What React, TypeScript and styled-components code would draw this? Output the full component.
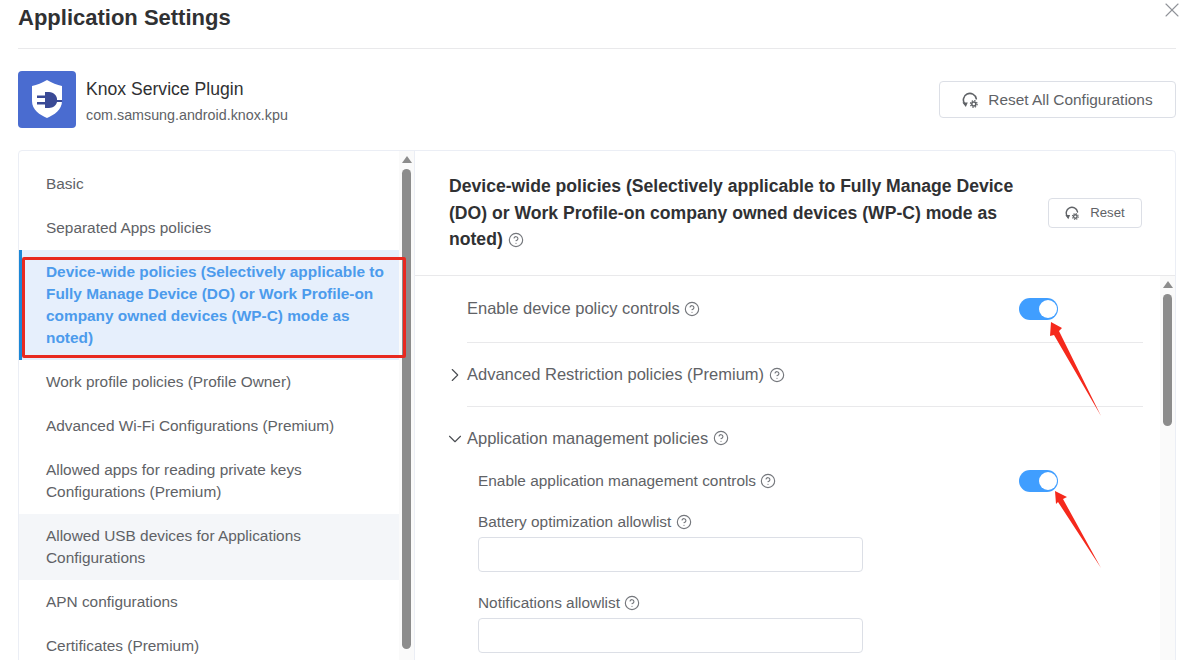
import styled, { createGlobalStyle } from "styled-components";
import { ChevronDown, ChevronRight, CircleHelp, X } from "lucide-react";

const GlobalStyle = createGlobalStyle`
  html, body {
    margin: 0;
    padding: 0;
    background: #ffffff;
    overflow: hidden;
  }
  * {
    box-sizing: border-box;
  }
`;

const navItems = [
  { label: "Basic" },
  { label: "Separated Apps policies" },
  {
    label:
      "Device-wide policies (Selectively applicable to Fully Manage Device (DO) or Work Profile-on company owned devices (WP-C) mode as noted)",
    active: true,
  },
  { label: "Work profile policies (Profile Owner)" },
  { label: "Advanced Wi-Fi Configurations (Premium)" },
  { label: "Allowed apps for reading private keys Configurations (Premium)" },
  { label: "Allowed USB devices for Applications Configurations", hovered: true },
  { label: "APN configurations" },
  { label: "Certificates (Premium)" },
];

function ResetIcon({ size }: { size: number }) {
  return (
    <svg width={size} height={size} viewBox="0 0 16 16" fill="none">
      <path
        d="M3 12.200A6.500 6.500 0 1 1 14.300 6.800"
        stroke="#5f6266"
        strokeWidth="1.6"
        strokeLinecap="round"
      />
      <path d="M0.400 10.400 L5.800 10.400 L3.800 15 Z" fill="#5f6266" />
      <circle cx="11.800" cy="12" r="2" stroke="#5f6266" strokeWidth="1.500" />
      <circle
        cx="11.800"
        cy="12"
        r="3.300"
        stroke="#5f6266"
        strokeWidth="1.300"
        strokeDasharray="1.400 1.190"
      />
    </svg>
  );
}

function KnoxLogo() {
  return (
    <svg width="58" height="57" viewBox="0 0 58 57">
      <rect width="58" height="57" rx="4" fill="#4a6cd0" />
      <path
        d="M29 9C34 12 39 14 44 15V30C44 39 36 44 29 47C22 44 14 39 14 30V15C19 14 24 12 29 9Z"
        fill="#ffffff"
      />
      <path
        d="M27 21H31C36 21 39 25 39 28V29H44V31H39C38.500 34 35 37 31 37H27Z"
        fill="#3a4a96"
      />
      <rect x="19" y="24.500" width="8" height="2.500" fill="#3a4a96" />
      <rect x="19" y="31" width="8" height="2.500" fill="#3a4a96" />
    </svg>
  );
}

function Help() {
  return <HelpIcon size={16} strokeWidth={1.7} />;
}

function Scrollbar({ width, thumb }: { width: number; thumb: number }) {
  return (
    <ScrollTrack $width={width}>
      <ScrollUp />
      <ScrollThumb $height={thumb} />
    </ScrollTrack>
  );
}

export default function App() {
  return (
    <Page>
      <GlobalStyle />
      <DialogHeader>
        <DialogTitle>Application Settings</DialogTitle>
        <CloseButton>
          <X size={24} strokeWidth={1.1} />
        </CloseButton>
      </DialogHeader>

      <AppRow>
        <AppInfo>
          <KnoxLogo />
          <AppText>
            <AppName>Knox Service Plugin</AppName>
            <AppPackage>com.samsung.android.knox.kpu</AppPackage>
          </AppText>
        </AppInfo>
        <ResetAllButton>
          <ResetIcon size={16} />
          Reset All Configurations
        </ResetAllButton>
      </AppRow>

      <Panel>
        <Sidebar>
          <NavList>
            {navItems.map((item) => (
              <NavItem key={item.label} $active={item.active} $hovered={item.hovered}>
                {item.label}
              </NavItem>
            ))}
          </NavList>
          <Scrollbar width={15} thumb={480} />
        </Sidebar>

        <Main>
          <MainHeader>
            <MainTitle>
              Device-wide policies (Selectively applicable to Fully Manage Device (DO) or Work
              Profile-on company owned devices (WP-C) mode as noted) <Help />
            </MainTitle>
            <ResetButton>
              <ResetIcon size={14} />
              <ResetLabel>Reset</ResetLabel>
            </ResetButton>
          </MainHeader>

          <MainBody>
            <Settings>
              <TopRow>
                <RowLabel>
                  Enable device policy controls <Help />
                </RowLabel>
                <Toggle />
              </TopRow>
              <SectionRow>
                <ChevronRight size={22} strokeWidth={1.2} color="#4a4d52" />
                <RowLabel>
                  Advanced Restriction policies (Premium) <Help />
                </RowLabel>
              </SectionRow>
              <SectionRow $open>
                <ChevronDown size={22} strokeWidth={1.2} color="#4a4d52" />
                <RowLabel>
                  Application management policies <Help />
                </RowLabel>
              </SectionRow>
              <SubSettings>
                <SubRow>
                  <SubLabel>
                    Enable application management controls <Help />
                  </SubLabel>
                  <Toggle />
                </SubRow>
                <Field>
                  <SubLabel>
                    Battery optimization allowlist <Help />
                  </SubLabel>
                  <TextBox />
                </Field>
                <Field>
                  <SubLabel>
                    Notifications allowlist <Help />
                  </SubLabel>
                  <TextBox />
                </Field>
              </SubSettings>
            </Settings>
            <Scrollbar width={15} thumb={132} />
          </MainBody>
        </Main>
      </Panel>

      <Annotations width="1190" height="660" viewBox="0 0 1190 660">
        <polygon
          points="1051,322 1062,328 1059,331 1101,416 1054,335 1050,336"
          fill="#f5291c"
        />
        <polygon
          points="1055,491 1067,497 1063,499 1101,568 1058,502 1056,504"
          fill="#f5291c"
        />
      </Annotations>
    </Page>
  );
}

const Page = styled.div`
  position: relative;
  width: 1190px;
  height: 660px;
  padding: 0 14px 0 18px;
  overflow: hidden;
  font-family: "Liberation Sans", Arial, sans-serif;
  color: #606266;
`;

const DialogHeader = styled.header`
  height: 49px;
  border-bottom: 1px solid #e9e9eb;
`;

const DialogTitle = styled.h1`
  margin: 0;
  font-size: 22px;
  line-height: 36px;
  font-weight: 700;
  color: #303133;
`;

const CloseButton = styled.span`
  position: absolute;
  top: -2px;
  right: 6px;
  color: #909399;
`;

const AppRow = styled.div`
  display: flex;
  align-items: center;
  justify-content: space-between;
  height: 57px;
  margin: 22px 0;
`;

const AppInfo = styled.div`
  display: flex;
  align-items: center;
  gap: 10px;
`;

const AppText = styled.div`
  display: flex;
  flex-direction: column;
  gap: 7px;
  padding-top: 3px;
`;

const AppName = styled.div`
  font-size: 17.6px;
  line-height: 20px;
  color: #303133;
`;

const AppPackage = styled.div`
  font-size: 14.3px;
  line-height: 18px;
  color: #606266;
`;

const ResetAllButton = styled.button`
  display: flex;
  align-items: center;
  justify-content: center;
  gap: 10px;
  width: 237px;
  height: 37px;
  border: 1px solid #dcdfe6;
  border-radius: 4px;
  background: #ffffff;
  color: #606266;
  font-family: inherit;
  font-size: 15.4px;
`;

const Panel = styled.section`
  display: flex;
  height: 600px;
  border: 1px solid #ebeef5;
  border-radius: 4px;
`;

const Sidebar = styled.aside`
  display: flex;
  flex: none;
  width: 396px;
  border-right: 1px solid #ebeef5;
`;

const NavList = styled.nav`
  flex: 1;
  padding-top: 11px;
`;

const NavItem = styled.div<{ $active?: boolean; $hovered?: boolean }>`
  position: relative;
  padding: 11px 14px 11px ${(p) => (p.$active ? "24px" : "27px")};
  font-size: 15.4px;
  line-height: 22px;
  border-left: ${(p) => (p.$active ? "3px solid #1b87d6" : "none")};
  font-weight: ${(p) => (p.$active ? 700 : 400)};
  color: ${(p) => (p.$active ? "#4c9bec" : "#606266")};
  background: ${(p) => (p.$active ? "#e6effc" : p.$hovered ? "#f4f6f9" : "transparent")};

  ${(p) =>
    p.$active &&
    `
    &::after {
      content: "";
      position: absolute;
      top: 7px;
      bottom: 2px;
      left: 0;
      right: -7px;
      z-index: 2;
      border: 3px solid #e8291f;
      border-radius: 2px;
    }
  `}
`;

const ScrollTrack = styled.div<{ $width: number }>`
  display: flex;
  flex: none;
  flex-direction: column;
  align-items: center;
  width: ${(p) => p.$width}px;
  background: #fafafa;
`;

const ScrollUp = styled.div`
  flex: none;
  width: 0;
  height: 0;
  margin-top: 5px;
  border-left: 5px solid transparent;
  border-right: 5px solid transparent;
  border-bottom: 7px solid #8c8c8c;
`;

const ScrollThumb = styled.div<{ $height: number }>`
  flex: none;
  width: 9px;
  height: ${(p) => p.$height}px;
  margin-top: 6px;
  border-radius: 5px;
  background: #8c8c8c;
`;

const Main = styled.div`
  display: flex;
  flex: 1;
  flex-direction: column;
  min-width: 0;
`;

const MainHeader = styled.div`
  display: flex;
  align-items: center;
  justify-content: space-between;
  flex: none;
  height: 125px;
  padding: 0 33px 0 34px;
  border-bottom: 1px solid #e9e9eb;
`;

const MainTitle = styled.h2`
  width: 575px;
  margin: 0;
  font-size: 17.6px;
  line-height: 26.4px;
  font-weight: 700;
  color: #303133;
`;

const ResetButton = styled.button`
  display: flex;
  flex: none;
  align-items: center;
  justify-content: center;
  gap: 11px;
  width: 94px;
  height: 30px;
  border: 1px solid #dcdfe6;
  border-radius: 4px;
  background: #ffffff;
  color: #606266;
  font-family: inherit;
  font-size: 13.2px;
`;

const ResetLabel = styled.span`
  padding-bottom: 2px;
`;

const MainBody = styled.div`
  display: flex;
  flex: 1;
  min-height: 0;
`;

const Settings = styled.div`
  flex: 1;
  padding: 0 17px 0 52px;
`;

const TopRow = styled.div`
  display: flex;
  align-items: center;
  justify-content: space-between;
  height: 67px;
  padding-right: 85px;
  border-bottom: 1px solid #e9e9eb;
`;

const SectionRow = styled.div<{ $open?: boolean }>`
  display: flex;
  align-items: center;
  gap: 1px;
  height: ${(p) => (p.$open ? "63px" : "64px")};
  margin-left: -23px;
  ${(p) =>
    !p.$open &&
    `
    background: linear-gradient(#e9e9eb, #e9e9eb) no-repeat 23px 100% / calc(100% - 23px) 1px;
  `}
`;

const RowLabel = styled.div`
  padding-bottom: 2px;
  font-size: 16.5px;
  line-height: 22px;
  color: #606266;
`;

const HelpIcon = styled(CircleHelp)`
  vertical-align: -2.5px;
  color: #74777c;
`;

const Toggle = styled.span`
  position: relative;
  display: block;
  flex: none;
  width: 39px;
  height: 22px;
  border-radius: 11px;
  background: #409eff;

  &::after {
    content: "";
    position: absolute;
    top: 2px;
    right: 1px;
    width: 18px;
    height: 18px;
    border-radius: 50%;
    background: #ffffff;
  }
`;

const SubSettings = styled.div`
  padding-left: 11px;
`;

const SubRow = styled.div`
  display: flex;
  align-items: center;
  justify-content: space-between;
  height: 22px;
  padding-right: 85px;
`;

const SubLabel = styled.div`
  font-size: 15.4px;
  line-height: 18px;
  color: #606266;
`;

const Field = styled.div`
  display: flex;
  flex-direction: column;
  gap: 6px;
  margin-top: 21px;

  & + & {
    margin-top: 22px;
  }
`;

const TextBox = styled.input`
  width: 385px;
  height: 35px;
  border: 1px solid #dcdfe6;
  border-radius: 4px;
  background: #ffffff;
`;

const Annotations = styled.svg`
  position: absolute;
  top: 0;
  left: 0;
  z-index: 3;
  pointer-events: none;
`;
